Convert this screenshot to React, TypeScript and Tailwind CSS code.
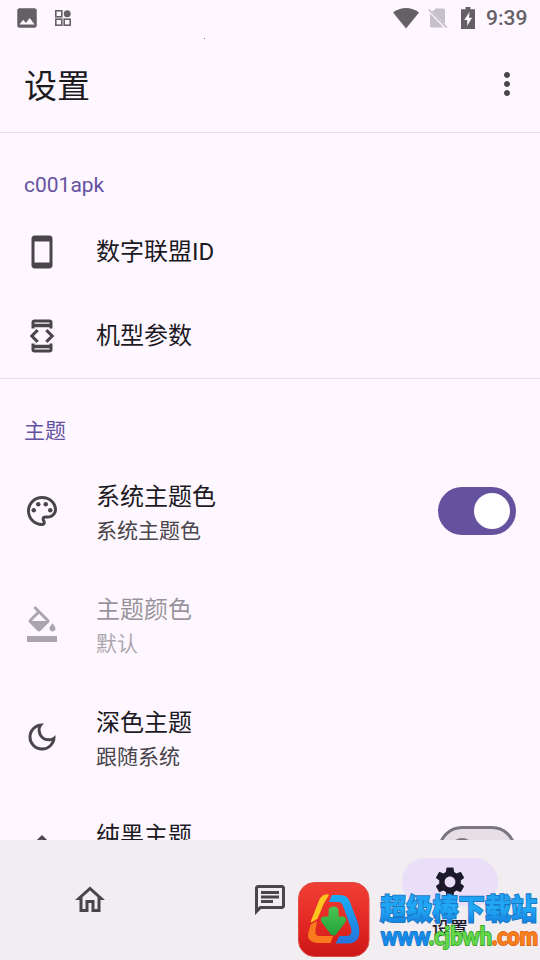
import type { ComponentType, ReactNode } from "react";
import {
  MdFormatColorFill,
  MdImage,
  MdMoreVert,
  MdOutlineChat,
  MdOutlineDarkMode,
  MdOutlineHome,
  MdOutlineInvertColors,
  MdOutlinePalette,
  MdSettings,
  MdSmartphone,
} from "react-icons/md";

interface RowProps {
  icon: ComponentType<{ className?: string }>;
  title: string;
  summary?: string;
  disabled?: boolean;
  children?: ReactNode;
}

function DeveloperIcon({ className }: { className?: string }) {
  return (
    <svg viewBox="0 0 24 24" className={className} fill="none" stroke="currentColor" strokeWidth="2">
      <path d="M6 7V3Q6 2 7 2H17Q18 2 18 3V7M6 17V21Q6 22 7 22H17Q18 22 18 21V17" />
      <path d="M6 5H18M6 19H18" strokeWidth="2.300" />
      <path d="M9.100 8.100L5.200 12L9.100 15.900M14.900 8.100L18.800 12L14.900 15.900" />
    </svg>
  );
}

function StatusBar() {
  return (
    <div className="flex h-9 shrink-0 items-center px-4 text-[#646066]">
      <MdImage className="size-[26px] -ml-0.5" />
      <svg viewBox="0 0 16 16" className="ml-[15px] size-4" fill="none" stroke="currentColor" strokeWidth="1.6">
        <rect x="0.8" y="0.8" width="6" height="6" />
        <rect x="0.8" y="9.2" width="6" height="6" />
        <rect x="9.2" y="9.2" width="6" height="6" />
        <circle cx="12.2" cy="3.8" r="3.5" fill="currentColor" stroke="none" />
      </svg>
      <svg viewBox="0 0 26 21" className="ml-auto h-[21px] w-[26px]" fill="currentColor">
        <path d="M0 4.500C7.500-1.500 18.500-1.500 26 4.500L13 20.500Z" />
      </svg>
      <svg viewBox="0 0 20 21" className="ml-[9px] h-[21px] w-5" fill="#c6c1c8">
        <path d="M8 .5H15.500Q17 .5 17 2V16.200L4 3.500ZM2 5.500L15.500 19.500H3.500Q2 19.500 2 18Z" />
        <path d="M0 2L1.200 .8L19.500 19L18.200 20.300Z" />
      </svg>
      <svg viewBox="0 0 14 22" className="ml-[13px] h-[22px] w-3.5">
        <path d="M4.500 0H9.500V2.200H14V22H0V2.200H4.500Z" fill="currentColor" />
        <path d="M8.500 5L3.200 13H6.200V19L11 10.800H8Z" fill="#fef7ff" />
      </svg>
      <span className="-mr-1 mt-px ml-[11px] w-[42px] text-[21px] font-medium leading-none whitespace-nowrap">9:39</span>
    </div>
  );
}

function Category({ label }: { label: string }) {
  return <h2 className="h-[75px] pt-[37px] pl-6 text-[21px] leading-[30px] text-[#65529f]">{label}</h2>;
}

function Row({ icon: Icon, title, summary, disabled, children }: RowProps) {
  return (
    <li
      className={`flex shrink-0 items-center px-6 ${summary ? "h-[113px]" : "h-[84px]"} ${disabled ? "opacity-45" : ""}`}
    >
      <Icon className="size-9 shrink-0 text-[#49454b]" />
      <div className={`ml-9 flex-1 ${summary ? "pt-[5px]" : ""}`}>
        <div className="text-[24px] leading-9 text-[#1c1a1f]">{title}</div>
        {summary && <div className="text-[21px] leading-8 text-[#49454b]">{summary}</div>}
      </div>
      {children}
    </li>
  );
}

function Switch({ on }: { on?: boolean }) {
  if (on) {
    return (
      <div className="flex h-12 w-[78px] items-center justify-end rounded-full bg-[#65529f] pr-1.5">
        <div className="size-9 rounded-full bg-white" />
      </div>
    );
  }
  return (
    <div className="flex h-12 w-[78px] items-center rounded-full border-3 border-[#7a757f] bg-[#e6e0e6] pl-[9px]">
      <div className="size-6 rounded-full bg-[#7a757f]" />
    </div>
  );
}

function BottomNav() {
  return (
    <nav className="grid h-[120px] shrink-0 grid-cols-3 bg-[#f1edf1] text-[#49454b]">
      <div className="flex items-center justify-center">
        <MdOutlineHome className="size-9" />
      </div>
      <div className="flex items-center justify-center">
        <MdOutlineChat className="size-9" />
      </div>
      <div className="flex flex-col items-center pt-[18px] text-[#1c192b]">
        <div className="flex h-12 w-24 items-center justify-center rounded-full bg-[#e9dff8]">
          <MdSettings className="size-9" />
        </div>
        <span className="mt-[9px] text-[18px] font-medium leading-7">设置</span>
      </div>
    </nav>
  );
}

function SiteBadge() {
  return (
    <svg viewBox="0 0 244 80" className="absolute bottom-0 left-[296px] h-20 w-[244px]">
      <defs>
        <linearGradient id="red" x1="0" y1="0" x2="0" y2="1">
          <stop offset="0" stopColor="#f04036" />
          <stop offset="0.5" stopColor="#e52a25" />
          <stop offset="1" stopColor="#cc1717" />
        </linearGradient>
        <linearGradient id="blue" x1="0" y1="0" x2="0" y2="1">
          <stop offset="0" stopColor="#19aef6" />
          <stop offset="1" stopColor="#2574dc" />
        </linearGradient>
        <linearGradient id="green" x1="0" y1="0" x2="0" y2="1">
          <stop offset="0" stopColor="#4ac34f" />
          <stop offset="1" stopColor="#22a43b" />
        </linearGradient>
        <linearGradient id="title" x1="0" y1="0" x2="0" y2="1">
          <stop offset="0.2" stopColor="#1f9df0" />
          <stop offset="0.55" stopColor="#21aaf6" />
          <stop offset="0.9" stopColor="#1680df" />
        </linearGradient>
      </defs>
      <rect x="2.500" y="2.500" width="70.500" height="74" rx="16" fill="url(#red)" stroke="#dc4a44" />
      <path d="M32 15L27.500 22.500L21 38L15.500 41.500L24 20Q26.500 15 32 15Z" fill="#ffc41e" stroke="#ffc41e" strokeWidth="1.500" strokeLinejoin="round" />
      <path d="M14.800 44.500L21 41L19.500 50Q18.500 56 24 56H37L34.500 63H23Q10 62.500 12.500 52Z" fill="#fb7a1d" />
      <path
        d="M36 15H44Q51 15 53.500 21L62 43Q67 62.500 53 63.500H39.500L43.500 56H50Q57 56 55 48L46.500 25Q45.500 22 42 22H33Z"
        fill="url(#blue)"
      />
      <path
        d="M33.500 31Q33.500 27.500 37.500 27.500T41.500 31V37.500H47Q51 38.500 48 42.500L40 53Q37.500 56 35 53L27 42.500Q24 38.500 28 37.500H33.500Z"
        fill="url(#green)"
        stroke="url(#green)"
        strokeWidth="2"
        strokeLinejoin="round"
      />
      <text
        x="84"
        y="39.500"
        textLength="157"
        lengthAdjust="spacingAndGlyphs"
        className="font-['Noto_Sans_CJK_SC',sans-serif] text-[29px] font-black [paint-order:stroke]"
        fill="url(#title)"
        stroke="#1878c4"
        strokeWidth="1.800"
      >
        超级棒下载站
      </text>
      <g className="font-['Lato',sans-serif] text-[25px] font-black [paint-order:stroke]" strokeWidth="1.800">
        <text x="85" y="64.500" textLength="49" lengthAdjust="spacingAndGlyphs" fill="#168ce8" stroke="#1577cc">www</text>
        <text x="133" y="64.500" textLength="63" lengthAdjust="spacingAndGlyphs" fill="#62d84a" stroke="#3ba52e">.cjbwh</text>
        <text x="196" y="64.500" textLength="46" lengthAdjust="spacingAndGlyphs" fill="#fb7f1d" stroke="#e06312">.com</text>
      </g>
    </svg>
  );
}

export default function App() {
  return (
    <div className="relative flex h-[960px] w-[540px] flex-col overflow-hidden bg-[#fef7ff] font-['Roboto','Noto_Sans_CJK_SC',sans-serif]">
      <StatusBar />
      <header className="flex h-[97px] shrink-0 items-center justify-between border-b border-[#e4dfe6] pr-[15px] pl-6">
        <h1 className="pt-1 text-[33px] leading-none text-[#1c1a1f]">设置</h1>
        <MdMoreVert className="size-9 text-[#49454b]" />
      </header>
      <span className="absolute top-[38px] left-[204px] size-px bg-[#77727a]" />
      <main className="min-h-0 flex-1 overflow-hidden">
        <section className="border-b border-[#e4dfe6]">
          <Category label="c001apk" />
          <ul className="pt-0.5">
            <Row icon={MdSmartphone} title="数字联盟ID" />
            <Row icon={DeveloperIcon} title="机型参数" />
          </ul>
        </section>
        <section>
          <Category label="主题" />
          <ul>
            <Row icon={MdOutlinePalette} title="系统主题色" summary="系统主题色">
              <Switch on />
            </Row>
            <Row icon={MdFormatColorFill} title="主题颜色" summary="默认" disabled />
            <Row icon={MdOutlineDarkMode} title="深色主题" summary="跟随系统" />
            <Row icon={MdOutlineInvertColors} title="纯黑主题" summary="纯黑主题">
              <Switch />
            </Row>
          </ul>
        </section>
      </main>
      <BottomNav />
      <SiteBadge />
    </div>
  );
}
